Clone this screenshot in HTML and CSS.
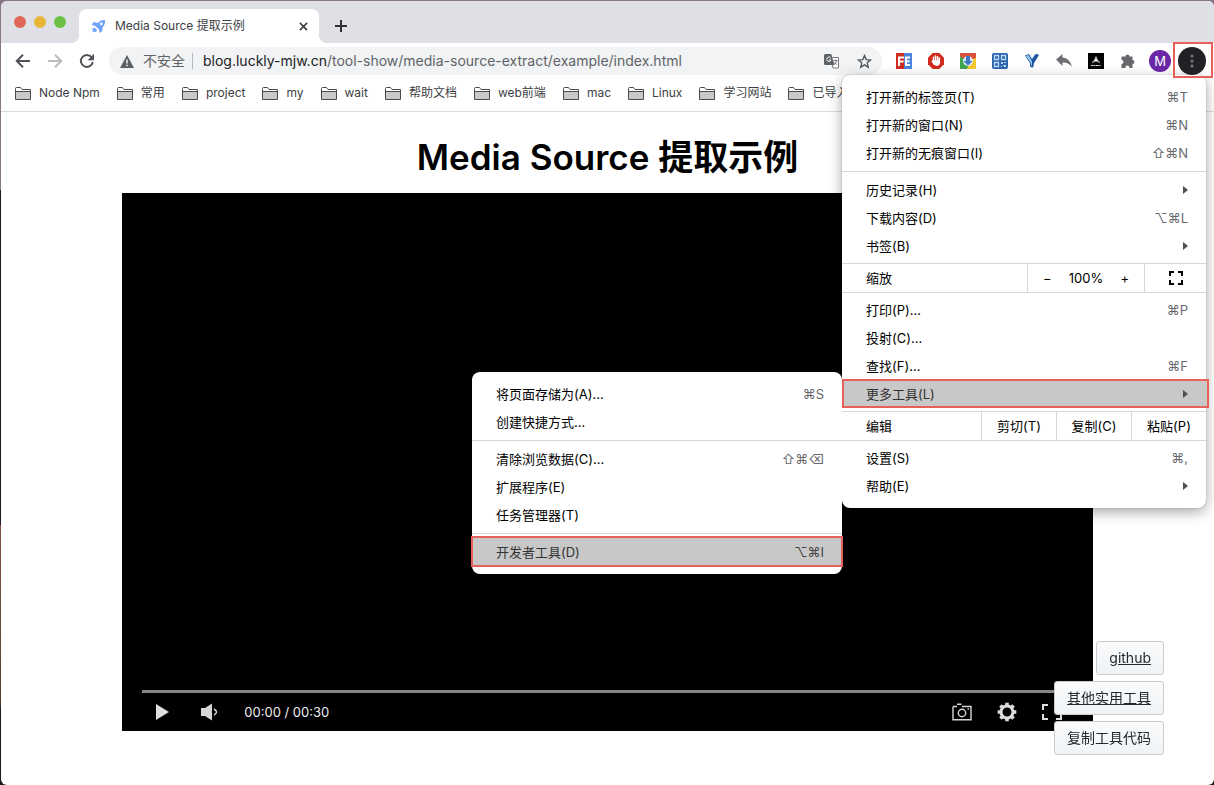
FILE: index.html
```html
<!DOCTYPE html>
<html lang="zh-CN">
<head>
  <meta charset="UTF-8">
  <title>Media Source 提取示例</title>
  <link rel="stylesheet" href="styles.css">
</head>
<body>
  <svg class="sprite" aria-hidden="true">
    <symbol id="folder" viewBox="0 0 16 14">
      <path d="M.5 13.500V2.500q0-1 1-1h4l1.500 2h8.500v10z" fill="#fff" stroke="#4a4a4a"/>
      <path d="M1 5.500h14v7.500H1z" fill="#c9c9c9"/>
      <path d="M.5 5.500h15" stroke="#4a4a4a"/>
    </symbol>
  </svg>

  <div class="window">
    <!-- 标签栏 -->
    <header class="tab-strip">
      <div class="lights">
        <span class="light red"></span>
        <span class="light yellow"></span>
        <span class="light green"></span>
      </div>
      <div class="tab">
        <svg width="16" height="16" viewBox="0 0 16 16" fill="#6fa2fa">
          <path d="M14 2c-3.500-.3-5.500 1-7 3L2.500 4 .8 7l3.700 1L8 11.500l.4 3.500 2.900-2 .2-3.600C13.500 7.500 14.300 5 14 2z"/>
          <path d="M3.300 9.500 1 11l1 1-.5 2 2-.5 1 1 1.700-2.500z"/>
          <circle cx="10.200" cy="5.800" r="1.400" fill="#fff"/>
        </svg>
        <span class="tab-title">Media Source 提取示例</span>
        <button class="icon-btn tab-close" aria-label="关闭">
          <svg width="9" height="9" viewBox="0 0 10 10" stroke="#3c4043" stroke-width="1.800"><path d="M1 1l8 8M9 1 1 9"/></svg>
        </button>
      </div>
      <button class="icon-btn new-tab" aria-label="新标签页">
        <svg width="12" height="12" viewBox="0 0 12 12" stroke="#303236" stroke-width="2"><path d="M6 0v12M0 6h12"/></svg>
      </button>
    </header>

    <!-- 工具栏 -->
    <div class="toolbar">
      <nav class="tools">
        <button class="icon-btn" aria-label="后退">
          <svg width="16" height="16" viewBox="0 0 16 16" fill="none" stroke="#505357" stroke-width="2"><path d="M15 8H2.500M8 1.800 1.800 8 8 14.200"/></svg>
        </button>
        <button class="icon-btn" aria-label="前进">
          <svg width="16" height="16" viewBox="0 0 16 16" fill="none" stroke="#b9bbbe" stroke-width="2"><path d="M1 8h12.500M8 1.800 14.200 8 8 14.200"/></svg>
        </button>
        <button class="icon-btn" aria-label="重新加载">
          <svg width="16" height="16" viewBox="0 0 16 16" fill="none" stroke="#505357" stroke-width="2"><path d="M13.800 9A6 6 0 1 1 12.600 4.200"/><path d="M15 .8v6.400H8.600z" fill="#505357" stroke="none"/></svg>
        </button>
      </nav>
      <div class="address">
        <svg width="14" height="13" viewBox="0 0 14 13"><path d="M7 0l7 13H0z" fill="#5b5e62"/><path d="M7 4.500v4M7 9.700v1.500" stroke="#f1f3f4" stroke-width="1.500"/></svg>
        <span class="insecure">不安全</span>
        <label class="host" for="url">blog.luckly-mjw.cn</label>
        <input class="path" id="url" type="text" value="/tool-show/media-source-extract/example/index.html">
        <button class="icon-btn" aria-label="翻译">
          <svg width="16" height="15" viewBox="0 0 16 15"><path d="M7 3.500h7.500v10.500H9z" fill="#fff" stroke="#77797c"/><path d="M1.500 0h5.700l3.300 11H1.500Q0 11 0 9.500v-8Q0 0 1.500 0z" fill="#5f6368"/><path d="M6.800 4A2.200 2.200 0 1 0 7 6H5" fill="none" stroke="#fff"/><path d="M9.500 6.500h4M11.500 5.500v1M12.800 6.500q-.6 2.500-2.800 4M10.500 8q1 1.800 2.500 2.500" fill="none" stroke="#77797c"/></svg>
        </button>
        <button class="icon-btn" aria-label="收藏">
          <svg width="15" height="15" viewBox="0 0 16 16" fill="none" stroke="#55585c" stroke-width="1.500"><path d="M8 1.700l1.800 4.300 4.700.4-3.600 3 1.100 4.600L8 11.500 4 14l1.100-4.600-3.600-3L6.200 6z"/></svg>
        </button>
      </div>
      <div class="tools">
        <button class="icon-btn" aria-label="FeHelper">
          <svg width="16" height="16" viewBox="0 0 16 16"><path d="M0 0h8v16H0z" fill="#cf2d1e"/><path d="M8 0h8v16H8z" fill="#4b86dc"/><path d="M3 13V4.500h5M3 8.500h4.500M14 4.500h-4V12h4M10 8.300h3.500" fill="none" stroke="#fff" stroke-width="2"/></svg>
        </button>
        <button class="icon-btn" aria-label="广告拦截">
          <svg width="16" height="16" viewBox="0 0 16 16"><path d="M4.700 0h6.600L16 4.700v6.600L11.300 16H4.700L0 11.300V4.700z" fill="#d02b1c"/><path d="M5.500 9.500V4.200M7.500 8V3M9.500 8V3.700M11.300 9V5M4.200 8l2 3" stroke="#fff" stroke-width="1.500" stroke-linecap="round"/><path d="M4.800 7.500h7.200V10q-.5 3-3.500 3-2 0-3.700-3z" fill="#fff"/></svg>
        </button>
        <button class="icon-btn" aria-label="下载工具">
          <svg width="16" height="16" viewBox="0 0 16 16"><path d="M0 0h16v6H0z" fill="#d94f3e"/><path d="M0 3l8 6v7H0z" fill="#3fa450"/><path d="M16 5v11H7l3-9z" fill="#f6c932"/><circle cx="8" cy="8" r="5" fill="#dce7f8"/><path d="M6 3h4v5h2.500L8 12.500 3.500 8H6z" fill="#3e75c7"/></svg>
        </button>
        <button class="icon-btn" aria-label="二维码">
          <svg width="16" height="16" viewBox="0 0 16 16"><rect width="16" height="16" rx="2" fill="#2b66ad"/><path d="M2.500 2.500h4v4h-4zM9.500 2.500h4v4h-4zM2.500 9.500h4v4h-4z" fill="none" stroke="#bad8f6" stroke-width="1.300"/><path d="M9 9h2v2H9zM12 9h2v1h-2zM11 12h3v2h-2v-1h-1zM9 13h1v1H9z" fill="#bad8f6"/></svg>
        </button>
        <button class="icon-btn" aria-label="V">
          <svg width="14" height="14" viewBox="0 0 14 14"><path d="M0 1.500 4 0l3 5 3-4.500q2-1 4 .5L9 9q-.3 3-1 4.500-2 0-3-1V9z" fill="#1f56a0"/><path d="M1 2 3.500 1 7 7.500v4H6V9z" fill="#9accf0"/></svg>
        </button>
        <button class="icon-btn" aria-label="返回">
          <svg width="16" height="14" viewBox="0 0 16 14" fill="#6d6f72"><path d="M0 5.500 6.500 0v3.500Q14 4 16 13q-3.500-5-9.500-4.500V12z"/></svg>
        </button>
        <button class="icon-btn" aria-label="扩展">
          <svg width="16" height="16" viewBox="0 0 16 16"><path d="M0 0h16v16H0z"/><path d="M4 9.500Q7 8 8 3.500q1 4.500 4 6Q8 6.500 4 9.500z" fill="#fff" stroke="#fff" stroke-width=".5"/><path d="M3 12.500h10" stroke="#ddd" stroke-dasharray="2 .5"/></svg>
        </button>
        <button class="icon-btn" aria-label="扩展程序">
          <svg width="16" height="16" viewBox="0 0 16 16" fill="#66686c"><path d="M2.500 3.500h3a2 2 0 1 1 4 0h3v3.500a2 2 0 1 1 0 4V15H9.300a2 2 0 1 0-3.800 0H1.500v-4a2 2 0 1 0 0-4V4.500q0-1 1-1z"/></svg>
        </button>
        <button class="icon-btn" aria-label="账户"><span class="avatar">M</span></button>
        <button class="icon-btn more" aria-label="更多">
          <svg width="28" height="28" viewBox="0 0 28 28"><circle cx="14" cy="14" r="14" fill="#202124"/><g fill="#7a7c80"><circle cx="14" cy="9" r="1.500"/><circle cx="14" cy="14" r="1.500"/><circle cx="14" cy="19" r="1.500"/></g></svg>
        </button>
      </div>
    </div>

    <!-- 书签栏 -->
    <nav class="bookmarks">
      <a href="#"><svg width="16" height="14"><use href="#folder"/></svg>Node Npm</a>
      <a href="#"><svg width="16" height="14"><use href="#folder"/></svg>常用</a>
      <a href="#"><svg width="16" height="14"><use href="#folder"/></svg>project</a>
      <a href="#"><svg width="16" height="14"><use href="#folder"/></svg>my</a>
      <a href="#"><svg width="16" height="14"><use href="#folder"/></svg>wait</a>
      <a href="#"><svg width="16" height="14"><use href="#folder"/></svg>帮助文档</a>
      <a href="#"><svg width="16" height="14"><use href="#folder"/></svg>web前端</a>
      <a href="#"><svg width="16" height="14"><use href="#folder"/></svg>mac</a>
      <a href="#"><svg width="16" height="14"><use href="#folder"/></svg>Linux</a>
      <a href="#"><svg width="16" height="14"><use href="#folder"/></svg>学习网站</a>
      <a href="#"><svg width="16" height="14"><use href="#folder"/></svg>已导入</a>
    </nav>

    <!-- 页面内容 -->
    <main class="page">
      <h1>Media Source 提取示例</h1>
      <section class="player">
        <input class="progress" type="range" min="0" max="30" value="0" aria-label="播放进度">
        <div class="controls">
          <button class="icon-btn" aria-label="播放">
            <svg width="13" height="16" viewBox="0 0 13 16" fill="#dedede"><path d="M0 0l13 8-13 8z"/></svg>
          </button>
          <button class="icon-btn volume" aria-label="音量">
            <svg width="17" height="18" viewBox="0 0 17 18"><path d="M0 5h4l7-4.500v17L4 13H0z" fill="#d6d6d6"/><path d="M13 6q5 3 0 6" fill="none" stroke="#d6d6d6" stroke-width="1.500"/></svg>
          </button>
          <span class="time">00:00 / 00:30</span>
          <button class="icon-btn" aria-label="截图">
            <svg width="20" height="18" viewBox="0 0 20 18" fill="none" stroke="#d6d6d6" stroke-width="1.400"><path d="M1 3.500h4M5 1.200h4.500M10 3.500h9v13.200H1V3.500"/><circle cx="10" cy="10" r="3.700"/><path d="M15.500 6h1.500"/></svg>
          </button>
          <button class="icon-btn" aria-label="设置">
            <svg width="20" height="20" viewBox="0 0 20 20" fill="none" stroke="#dedede"><circle cx="10" cy="10" r="6" stroke-width="3"/><path d="M10 .7v3M10 16.300v3M.7 10h3M16.300 10h3M3.400 3.400l2.200 2.200M14.400 14.400l2.200 2.200M3.400 16.600l2.200-2.200M14.400 5.600l2.200-2.200" stroke-width="3.600"/></svg>
          </button>
          <button class="icon-btn" aria-label="全屏">
            <svg width="20" height="16" viewBox="0 0 20 16" fill="none" stroke="#dedede" stroke-width="2"><path d="M6 1H1v5M14 1h5v5M6 15H1v-5M14 15h5v-5"/></svg>
          </button>
        </div>
      </section>
    </main>

    <!-- 浮动按钮 -->
    <div class="float-links">
      <a class="float-btn" href="#">github</a>
      <a class="float-btn" href="#">其他实用工具</a>
      <button class="float-btn">复制工具代码</button>
    </div>

    <!-- 主菜单 -->
    <ul class="menu main-menu">
      <li><button class="item">打开新的标签页(T)<kbd>⌘T</kbd></button></li>
      <li><button class="item">打开新的窗口(N)<kbd>⌘N</kbd></button></li>
      <li><button class="item">打开新的无痕窗口(I)<kbd>⇧⌘N</kbd></button></li>
      <li class="line"></li>
      <li><button class="item">历史记录(H)<i class="arrow"></i></button></li>
      <li><button class="item">下载内容(D)<kbd>⌥⌘L</kbd></button></li>
      <li><button class="item">书签(B)<i class="arrow"></i></button></li>
      <li class="split">
        <span class="split-name">缩放</span>
        <div class="zoom">
          <button aria-label="缩小">−</button>
          <span>100%</span>
          <button aria-label="放大">+</button>
        </div>
        <button class="fullscreen" aria-label="全屏">
          <svg width="14" height="14" viewBox="0 0 14 14" fill="none" stroke="#000" stroke-width="2"><path d="M5 1H1v4M9 1h4v4M5 13H1V9M9 13h4V9"/></svg>
        </button>
      </li>
      <li><button class="item">打印(P)...<kbd>⌘P</kbd></button></li>
      <li><button class="item">投射(C)...</button></li>
      <li><button class="item">查找(F)...<kbd>⌘F</kbd></button></li>
      <li class="marked">
        <button class="item active">更多工具(L)<i class="arrow"></i></button>
        <ul class="menu sub-menu">
          <li><button class="item">将页面存储为(A)...<kbd>⌘S</kbd></button></li>
          <li><button class="item">创建快捷方式...</button></li>
          <li class="line"></li>
          <li><button class="item">清除浏览数据(C)...<kbd>⇧⌘⌫</kbd></button></li>
          <li><button class="item">扩展程序(E)</button></li>
          <li><button class="item">任务管理器(T)</button></li>
          <li class="line"></li>
          <li class="marked"><button class="item active">开发者工具(D)<kbd>⌥⌘I</kbd></button></li>
        </ul>
      </li>
      <li class="split">
        <span class="split-name">编辑</span>
        <button class="edit">剪切(T)</button>
        <button class="edit">复制(C)</button>
        <button class="edit">粘贴(P)</button>
      </li>
      <li><button class="item">设置(S)<kbd>⌘,</kbd></button></li>
      <li><button class="item">帮助(E)<i class="arrow"></i></button></li>
    </ul>
  </div>
</body>
</html>
```
FILE: styles.css
```css
* {
  box-sizing: border-box;
}
body {
  margin: 0;
  padding: 1px 0 0 1px;
  min-height: 100vh;
  background: linear-gradient(#877684 0, #877684 190px, #1d1b20 190px, #1d1b20 525px, #80563f 525px, #59402f 700px, #1d1b20 710px);
  font-family: Inter, "Noto Sans CJK SC", sans-serif;
  font-size: 13px;
  color: #000;
}
button, input {
  margin: 0;
  padding: 0;
  border: none;
  background: none;
  color: inherit;
  font: inherit;
}
svg {
  display: block;
  flex: none;
}
.sprite {
  position: absolute;
  width: 0;
  height: 0;
}
.window {
  position: relative;
  min-height: calc(100vh - 1px);
  background: #fff;
  border-radius: 6px;
  overflow: hidden;
}
.icon-btn {
  display: flex;
  align-items: center;
  justify-content: center;
  flex: none;
  width: 32px;
  height: 32px;
}

/* 标签栏 */
.tab-strip {
  display: flex;
  align-items: flex-end;
  height: 42px;
  padding-left: 13px;
  background: #dfe0e6;
}
.lights {
  display: flex;
  gap: 8px;
  width: 65px;
  padding-bottom: 15px;
}
.light {
  width: 12px;
  height: 12px;
  border-radius: 50%;
}
.red {
  background: #e0665a;
}
.yellow {
  background: #e9b738;
}
.green {
  background: #6dc045;
}
.tab {
  position: relative;
  display: flex;
  align-items: center;
  gap: 8px;
  width: 240px;
  height: 34px;
  padding-left: 12px;
  background: #fff;
  border-radius: 8px 8px 0 0;
}
.tab::before, .tab::after {
  content: "";
  position: absolute;
  bottom: 0;
  width: 8px;
  height: 8px;
}
.tab::before {
  right: 100%;
  background: radial-gradient(circle at 0 0, #dfe0e6 8px, #fff 8px);
}
.tab::after {
  left: 100%;
  background: radial-gradient(circle at 100% 0, #dfe0e6 8px, #fff 8px);
}
.tab-title {
  flex: 1;
  font-size: 12px;
  line-height: 16px;
  color: #3c4043;
}
.new-tab {
  margin: 0 0 1px 6px;
}

/* 工具栏 */
.toolbar {
  display: flex;
  align-items: center;
  gap: 6px;
  height: 36px;
  padding: 0 6px;
}
.tools {
  display: flex;
}
.address {
  display: flex;
  align-items: center;
  flex: 1;
  height: 28px;
  padding: 0 2px 0 11px;
  border-radius: 14px;
  background: #f1f3f4;
  font-size: 14px;
  line-height: 16px;
  color: #5f6368;
}
.insecure {
  margin: 0 10px 0 9px;
  padding-right: 7px;
  border-right: 1px solid #b5b8bc;
}
.host {
  color: #202124;
}
.path {
  flex: 1;
  min-width: 0;
}
.avatar {
  width: 22px;
  border-radius: 50%;
  background: #6a28a6;
  color: #fff;
  line-height: 22px;
  text-align: center;
}
.more {
  position: relative;
  z-index: 2;
}
.more::after, .marked::after {
  content: "";
  position: absolute;
  border: 2px solid #e8605a;
  pointer-events: none;
}
.more::after {
  inset: -3px -5px -1px -3px;
}

/* 书签栏 */
.bookmarks {
  display: flex;
  gap: 17px;
  height: 33px;
  padding: 0 14px 5px;
  border-bottom: 1px solid #d9dadb;
  overflow: hidden;
}
.bookmarks a {
  display: flex;
  align-items: center;
  gap: 8px;
  font-size: 12px;
  line-height: 16px;
  color: #3c4043;
  text-decoration: none;
  white-space: nowrap;
}

/* 页面内容 */
.page {
  padding-top: 23px;
}
h1 {
  margin: 0 0 13px;
  font-size: 35px;
  font-weight: 600;
  line-height: 44px;
  padding-bottom: 1px;
  text-align: center;
}
.player {
  display: flex;
  flex-direction: column;
  justify-content: flex-end;
  width: 80%;
  aspect-ratio: 971 / 538;
  margin: 0 auto;
  background: #000;
  color: #eee;
}
.progress {
  appearance: none;
  height: 3px;
  margin: 0 20px;
  background: #858585;
}
.progress::-webkit-slider-thumb {
  appearance: none;
  width: 0;
  height: 0;
}
.controls {
  display: flex;
  align-items: center;
  height: 38px;
  padding: 0 18px;
}
.controls .icon-btn {
  width: 45px;
}
.controls .volume {
  margin: 0 12px 0 2px;
}
.time {
  flex: 1;
}

/* 浮动按钮 */
.float-links {
  position: fixed;
  right: 50px;
  bottom: 30px;
  display: flex;
  flex-direction: column;
  align-items: flex-end;
  gap: 6px;
}
.float-btn {
  height: 34px;
  padding: 0 12px;
  border: 1px solid #c9cbce;
  border-radius: 3px;
  background: linear-gradient(#fafbfc, #eff3f6);
  font-size: 14px;
  line-height: 32px;
  color: #24292e;
}

/* 菜单 */
.menu {
  position: absolute;
  margin: 0;
  padding: 8px 0;
  border-radius: 8px;
  background: #fff;
  line-height: 18px;
  list-style: none;
}
.main-menu {
  z-index: 1;
  top: 74px;
  right: 8px;
  width: 364px;
  box-shadow: 0 4px 14px rgba(0, 0, 0, 0.35), 0 0 1px rgba(0, 0, 0, 0.4);
}
.sub-menu {
  top: -8px;
  right: 100%;
  width: 370px;
}
.item {
  display: flex;
  align-items: center;
  justify-content: space-between;
  width: 100%;
  height: 28px;
  padding: 0 18px 0 24px;
  line-height: 18px;
}
.item kbd {
  font-family: Inter, "DejaVu Sans", sans-serif;
  color: #66686c;
}
.arrow {
  border: 4px solid transparent;
  border-left: 5px solid #4d4f52;
  border-right: none;
}
.active {
  background: #c8c8c8;
  color: #333;
}
.active kbd {
  color: #444;
}
.marked {
  position: relative;
}
.marked::after {
  inset: -1px -3px 0 0;
}
.sub-menu .marked::after {
  inset: -2px -1px -1px;
}
.line {
  height: 1px;
  margin: 4px 0;
  background: #d7d7d7;
}
.split {
  display: flex;
  height: 30px;
  margin: 3px 0;
  border: 1px solid #d7d7d7;
  border-width: 1px 0;
}
.split-name {
  flex: 1;
  padding-left: 24px;
  line-height: 28px;
}
.zoom, .fullscreen, .edit {
  border-left: 1px solid #d7d7d7;
}
.zoom {
  display: flex;
  align-items: center;
  justify-content: space-between;
  width: 117px;
  padding: 0 15px;
}
.fullscreen {
  display: flex;
  align-items: center;
  justify-content: center;
  width: 62px;
}
.edit {
  width: 75px;
  line-height: 18px;
}
```
